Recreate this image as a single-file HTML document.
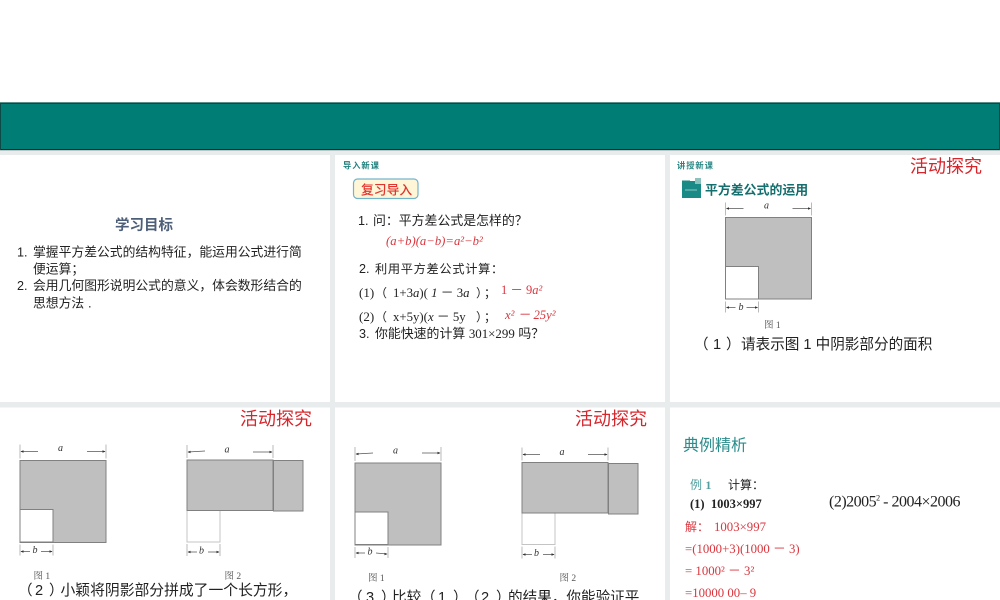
<!DOCTYPE html>
<html lang="zh">
<head>
<meta charset="utf-8">
<title>平方差公式</title>
<style>
html,body{margin:0;padding:0;background:#fff;width:1000px;height:600px;overflow:hidden}
svg{display:block;filter:blur(.3px)}
text{font-family:"Liberation Sans","Noto Sans CJK SC",sans-serif;fill:#222}
.s{font-family:"Liberation Serif","Noto Sans CJK SC",serif}
.i{font-style:italic}
.r{fill:#d9363e}
.h{font-size:18px;fill:#d6252b}
.t{font-size:12.900px}
.m{font-size:14.600px;fill:#222}
.cap{font-size:9.500px;fill:#555;font-family:"Liberation Serif","Noto Serif CJK SC",serif}
.lab{font-size:10px;font-style:italic;fill:#333;font-family:"Liberation Serif",serif;text-anchor:middle}
.g{fill:#bfbfbf;stroke:#808080;stroke-width:1}
.w{fill:#fff;stroke:#808080;stroke-width:1}
.wl{fill:#fff;stroke:#c4c4c4;stroke-width:1}
.l{stroke:#555;stroke-width:.8;fill:none}
.tick{stroke:#aaa;stroke-width:.8;fill:none}
.ar{fill:#333}
</style>
</head>
<body>
<svg width="1000" height="600" viewBox="0 0 1000 600" xmlns="http://www.w3.org/2000/svg">
  <rect width="1000" height="600" fill="#e8ecec"/>
  <rect x="0" y="0" width="1000" height="102" fill="#fff"/>
  <rect x="0" y="102" width="1000" height="48" fill="#007d75"/>
  <rect x="0" y="102" width="1000" height="1" fill="#5c8f8a"/>
  <rect x="0" y="103" width="1000" height="1" fill="#0b4a46"/>
  <rect x="0" y="149" width="1000" height="1.200" fill="#10302e"/>
  <rect x="0" y="103" width="1" height="47" fill="#0b4a46"/>
  <rect x="999" y="103" width="1" height="47" fill="#0b4a46"/>

  <rect x="0" y="155" width="330" height="247" fill="#fff"/>
  <rect x="335" y="155" width="330" height="247" fill="#fff"/>
  <rect x="670" y="155" width="330" height="247" fill="#fff"/>
  <rect x="0" y="407.500" width="330" height="193" fill="#fff"/>
  <rect x="335" y="407.500" width="330" height="193" fill="#fff"/>
  <rect x="670" y="407.500" width="330" height="193" fill="#fff"/>

  <!-- Panel 1 -->
  <text x="115" y="230" style="font-size:14.500px;font-weight:bold;fill:#4d5f78">学习目标</text>
  <text x="17" y="256.500" class="t" style="font-size:12.600px">1.</text>
  <text x="33" y="256.500" style="font-size:12.800px">掌握平方差公式的结构特征，能运用公式进行简</text>
  <text x="33" y="273.500" style="font-size:12.800px">便运算；</text>
  <text x="17" y="290" class="t" style="font-size:12.600px">2.</text>
  <text x="33" y="290" style="font-size:12.800px">会用几何图形说明公式的意义，体会数形结合的</text>
  <text x="33" y="307.500" style="font-size:12.800px">思想方法</text>
  <text x="88" y="307.500" class="t">.</text>

  <!-- Panel 2 -->
  <text x="343" y="168.500" style="font-size:8.300px;font-weight:bold;fill:#1f7f7d;letter-spacing:.9px">导入新课</text>
  <rect x="353.500" y="179" width="64.500" height="19.500" rx="4" fill="#fff6d8" stroke="#74b3cc" stroke-width="1.200"/>
  <text x="361" y="194.500" style="font-size:12.800px;font-weight:500;fill:#e0342f">复习导入</text>
  <text x="358" y="225" class="t" style="font-size:12.600px">1.</text>
  <text x="373" y="225" class="t">问：平方差公式是怎样的？</text>
  <text x="386" y="245" class="s i r" style="font-size:12.700px">(a+b)(a−b)=a²−b²</text>
  <text x="359" y="273" class="t" style="font-size:12.600px">2.</text>
  <text x="375" y="273" class="t" style="font-size:12.200px;letter-spacing:.7px">利用平方差公式计算：</text>
  <text x="359" y="297" class="s" style="font-size:13px">(1)</text>
  <text x="375" y="297" class="s" style="font-size:12px">（</text>
  <text x="393" y="297" class="s" style="font-size:12.800px">1+3<tspan class="i">a</tspan>)( <tspan class="i">1</tspan> － 3<tspan class="i">a</tspan></text>
  <text x="476" y="297" class="s" style="font-size:12px">）</text>
  <text x="484" y="297" class="s" style="font-size:12px">；</text>
  <text x="501" y="294" class="s r" style="font-size:12.500px">1 － 9<tspan class="i">a²</tspan></text>
  <text x="359" y="321" class="s" style="font-size:13px">(2)</text>
  <text x="375" y="321" class="s" style="font-size:12px">（</text>
  <text x="393" y="321" class="s" style="font-size:12.800px">x+5y)(<tspan class="i">x</tspan> － 5y</text>
  <text x="476" y="321" class="s" style="font-size:12px">）</text>
  <text x="484" y="321" class="s" style="font-size:12px">；</text>
  <text x="505" y="319" class="s i r" style="font-size:12.700px">x² － 25y²</text>
  <text x="359" y="338" class="t" style="font-size:12.600px">3.</text>
  <text x="375" y="338" class="t">你能快速的计算 <tspan class="s">301×299</tspan> 吗？</text>

  <!-- Panel 3 -->
  <text x="677" y="168.500" style="font-size:8.300px;font-weight:bold;fill:#2a8785;letter-spacing:.9px">讲授新课</text>
  <rect x="682" y="180.500" width="19" height="17.500" fill="#1a8a86"/>
  <rect x="695" y="178" width="6" height="6" fill="#8cc1bd"/>
  <rect x="690" y="178" width="5" height="3" fill="#fff"/>
  <rect x="685" y="189.500" width="12" height="1" fill="#8cc9c4"/>
  <text x="705" y="194.500" style="font-size:12.900px;font-weight:bold;fill:#136e6d">平方差公式的运用</text>
  <text x="910" y="172.500" class="h">活动探究</text>

  <g transform="translate(725.500,217.500)">
    <rect class="g" x="0" y="0" width="86" height="81.500"/>
    <rect class="w" x="0" y="49" width="33" height="32.500"/>
    <path class="tick" d="M0 -15V-2M86 -15V-2M0 84V95M33 84V95"/>
    <path class="l" d="M1 -9H18M67 -9H85M1 90H10M21 90H32"/>
    <path class="ar" d="M0.500 -9l3 -1.300v2.600zM85.500 -9l-3 -1.300v2.600zM0.500 90l3 -1.300v2.600zM32.500 90l-3 -1.300v2.600z"/>
    <text class="lab" x="41" y="-9">a</text>
    <text class="lab" x="15.500" y="92.500">b</text>
  </g>
  <text x="764" y="328" class="cap">图 1</text>
  <text x="694" y="349" class="m">（</text>
  <text x="713" y="349" class="m">1</text>
  <text x="726" y="349" class="m">）</text>
  <text x="741" y="349" class="m">请表示图 1 中阴影部分的面积</text>

  <!-- Panel 4 -->
  <text x="240" y="425" class="h">活动探究</text>
  <g transform="translate(20,460.500)">
    <rect class="g" x="0" y="0" width="86" height="82"/>
    <rect class="w" x="0" y="49" width="33" height="32.500"/>
    <path class="tick" d="M0 -16V-2M86 -16V-2M0 84V95M33 84V95"/>
    <path class="l" d="M1 -9H18M67 -9H85M1 91H10M21 91H32"/>
    <path class="ar" d="M0.500 -9l3 -1.300v2.600zM85.500 -9l-3 -1.300v2.600zM0.500 91l3 -1.300v2.600zM32.500 91l-3 -1.300v2.600z"/>
    <text class="lab" x="40.500" y="-9.500">a</text>
    <text class="lab" x="15" y="92.500">b</text>
  </g>
  <g transform="translate(187,460)">
    <rect class="wl" x="0" y="50" width="33" height="32"/>
    <rect class="g" x="0" y="0" width="86" height="50.500"/>
    <rect class="g" x="86.500" y="0.500" width="29.500" height="50.500"/>
    <path class="tick" d="M0 -15V-2M86 -15V-2M0 84V96M33 84V96"/>
    <path class="l" d="M1 -8L18 -9M66 -8H85M1 92H10M21 92H32"/>
    <path class="ar" d="M0.500 -8l3 -1.300v2.600zM85.500 -8l-3 -1.300v2.600zM0.500 92l3 -1.300v2.600zM32.500 92l-3 -1.300v2.600z"/>
    <text class="lab" x="40" y="-7.500">a</text>
    <text class="lab" x="14.500" y="93.500">b</text>
  </g>
  <text x="33.500" y="579" class="cap">图 1</text>
  <text x="224.500" y="579" class="cap">图 2</text>
  <text x="18" y="595" class="m">（</text>
  <text x="35" y="595" class="m">2</text>
  <text x="49" y="595" class="m">）</text>
  <text x="60.500" y="595" style="font-size:14.800px;fill:#222">小颖将阴影部分拼成了一个长方形，</text>

  <!-- Panel 5 -->
  <text x="575" y="425" class="h">活动探究</text>
  <g transform="translate(355,463)">
    <rect class="g" x="0" y="0" width="86" height="82"/>
    <rect class="w" x="0" y="49" width="33" height="32.500"/>
    <path class="tick" d="M0 -16V-2M86 -16V-2M0 84V95M33 84V95"/>
    <path class="l" d="M1 -9L18 -10M67 -10H85M1 90H10M21 90L32 91"/>
    <path class="ar" d="M0.500 -9l3 -1.300v2.600zM85.500 -10l-3 -1.300v2.600zM0.500 90l3 -1.300v2.600zM32.500 91l-3 -1.300v2.600z"/>
    <text class="lab" x="40.500" y="-9.500">a</text>
    <text class="lab" x="15" y="91.500">b</text>
  </g>
  <g transform="translate(522,462.500)">
    <rect class="wl" x="0" y="50" width="33" height="32"/>
    <rect class="g" x="0" y="0" width="86" height="50.500"/>
    <rect class="g" x="86.500" y="1" width="29.500" height="50.500"/>
    <path class="tick" d="M0 -15V-2M86 -15V-2M0 84V96M33 84V96"/>
    <path class="l" d="M1 -8H18M66 -8H85M1 92H10M21 92H32"/>
    <path class="ar" d="M0.500 -8l3 -1.300v2.600zM85.500 -8l-3 -1.300v2.600zM0.500 92l3 -1.300v2.600zM32.500 92l-3 -1.300v2.600z"/>
    <text class="lab" x="40" y="-7.500">a</text>
    <text class="lab" x="14.500" y="93.500">b</text>
  </g>
  <text x="368" y="581" class="cap">图 1</text>
  <text x="559.500" y="581" class="cap">图 2</text>
  <text x="348" y="602" class="m">（</text>
  <text x="366" y="602" class="m">3</text>
  <text x="381" y="602" class="m">）</text>
  <text x="392" y="602" class="m">比较</text>
  <text x="421" y="602" class="m">（</text>
  <text x="438" y="602" class="m">1</text>
  <text x="453" y="602" class="m">）</text>
  <text x="465" y="602" class="m">（</text>
  <text x="481" y="602" class="m">2</text>
  <text x="496" y="602" class="m">）</text>
  <text x="508" y="602" class="m">的结果，你能验证平</text>

  <!-- Panel 6 -->
  <text x="683" y="450.500" style="font-size:16px;fill:#2b8c8c">典例精析</text>
  <text x="690" y="489" style="font-size:12px;fill:#4f9f9f">例 <tspan class="s" style="font-weight:bold">1</tspan></text>
  <text x="728" y="489" style="font-size:12px">计算：</text>
  <text x="690" y="508" class="s" style="font-size:12.500px;font-weight:bold">(1)&#160;&#160;1003×997</text>
  <text x="829" y="506.500" class="s" style="font-size:16px;letter-spacing:-.5px;fill:#222">(2)2005<tspan dy="-6" style="font-size:8px">2</tspan><tspan dy="6"> - 2004×2006</tspan></text>
  <text x="685" y="531" style="font-size:12px;fill:#d9363e">解：</text>
  <text x="714" y="531" class="s r" style="font-size:12.800px">1003×997</text>
  <text x="685" y="553" class="s r" style="font-size:12.800px">=(1000+3)(1000 － 3)</text>
  <text x="685" y="575" class="s r" style="font-size:12.800px">= 1000² － 3²</text>
  <text x="685" y="597" class="s r" style="font-size:12.800px">=10000 00– 9</text>
</svg>
</body>
</html>
